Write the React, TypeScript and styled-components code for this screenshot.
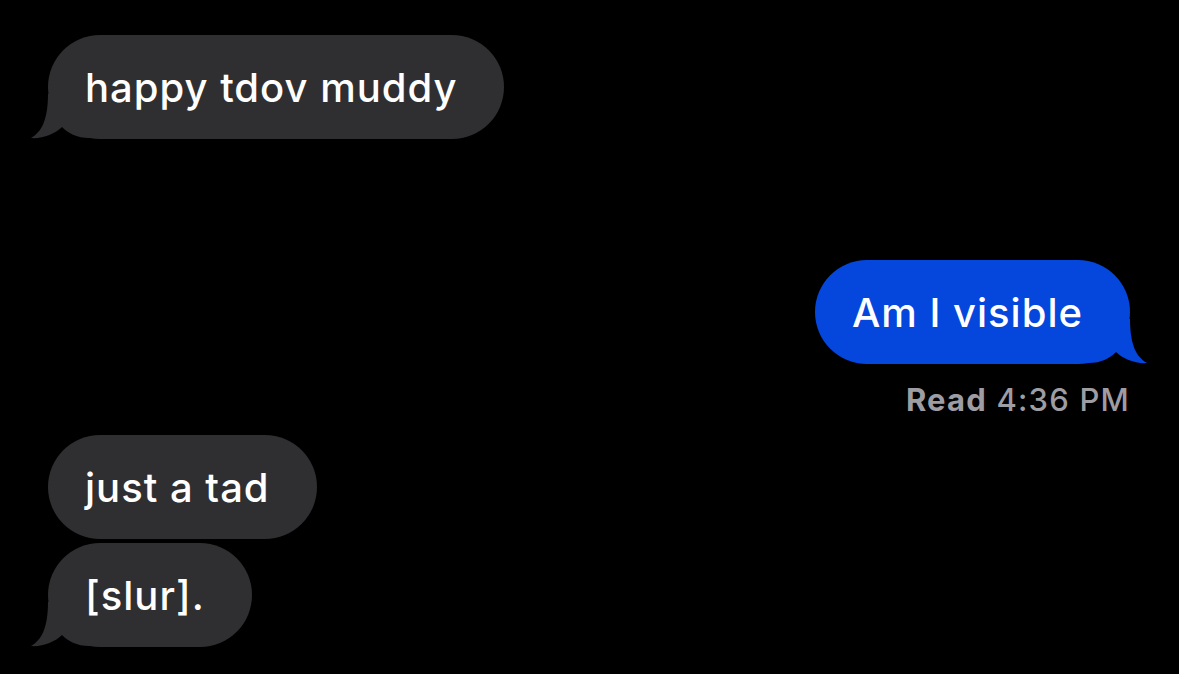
import styled, {createGlobalStyle} from "styled-components";

const GlobalStyle = createGlobalStyle`
  html, body {
    margin: 0;
    padding: 0;
    background: #000;
  }
  body {
    font-family: Inter, "Noto Sans", "Liberation Sans", sans-serif;
    -webkit-font-smoothing: antialiased;
  }
`

type Side = 'in' | 'out'

const Thread = styled.div`
  width: 1179px;
  height: 674px;
  box-sizing: border-box;
  padding: 35px 49px 0 48px;
  display: flex;
  flex-direction: column;
  overflow: hidden;
  background: #000;
`

const Bubble = styled.div<{ $side: Side; $gap?: number }>`
  position: relative;
  align-self: ${({$side}) => $side === 'out' ? 'flex-end' : 'flex-start'};
  margin-top: ${({$gap}) => `${$gap ?? 0}px`};
  height: 104px;
  box-sizing: border-box;
  padding: 0 47px 0 37px;
  display: flex;
  align-items: center;
  border-radius: 52px;
  background: ${({$side}) => $side === 'out' ? '#0546dd' : '#2f2f31'};
  color: #fff;
  font-size: 40px;
  font-weight: 500;
  letter-spacing: 1px;
  white-space: nowrap;

  span {
    position: relative;
    z-index: 1;
  }
`

const Tail = styled.svg<{ $side: Side }>`
  position: absolute;
  bottom: 0;
  width: 60px;
  height: 45px;
  ${({$side}) => $side === 'out'
    ? 'right: -18px; transform: scaleX(-1);'
    : 'left: -18px;'}
`

const Receipt = styled.div`
  align-self: flex-end;
  margin-top: 20px;
  font-size: 31px;
  line-height: 1;
  color: #9d9da3;
  font-weight: 500;
  letter-spacing: 1.2px;

  b {
    font-weight: 700;
  }
`

const Message = ({side, text, tail, gap}: { side: Side; text: string; tail?: boolean; gap?: number }) => (
  <Bubble $side={side} $gap={gap}>
    {tail && (
      <Tail $side={side} viewBox="0 0 60 45">
        <path
          d="M18,0 C18,25 12,38 1,44 C12,45 25,40 32,33 C38,39 46,44 60,44 L60,0 Z"
          fill={side === 'out' ? '#0546dd' : '#2f2f31'}
        />
      </Tail>
    )}
    <span>{text}</span>
  </Bubble>
)

const App = () => {
  return (
    <>
      <GlobalStyle/>
      <Thread>
        <Message side="in" text="happy tdov muddy" tail/>
        <Message side="out" text="Am I visible" tail gap={121}/>
        <Receipt><b>Read</b> 4:36 PM</Receipt>
        <Message side="in" text="just a tad" gap={20}/>
        <Message side="in" text="[slur]." tail gap={4}/>
      </Thread>
    </>
  )
}

export default App
